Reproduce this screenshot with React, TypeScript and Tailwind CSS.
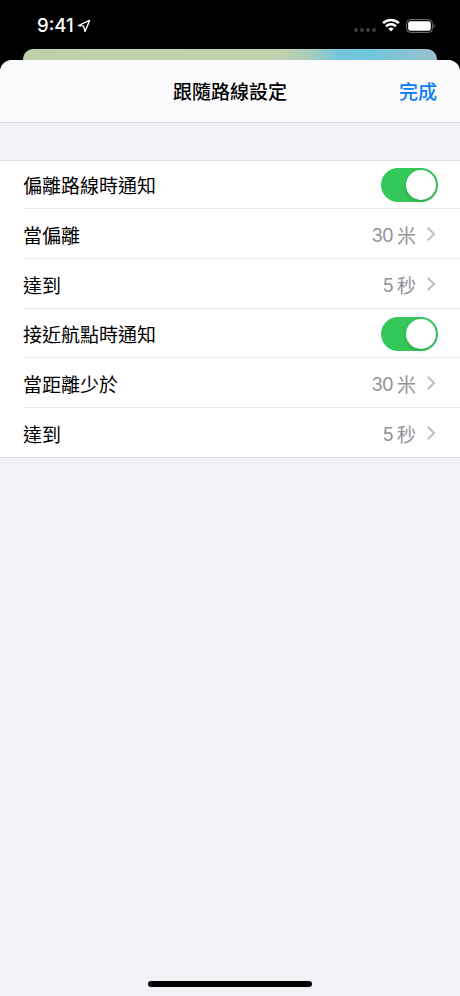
import React, { useState } from "react";

const StatusBar: React.FC = () => (
  <div className="flex h-[49px] items-start justify-between pl-[37px] pr-6 pt-[14px] text-white">
    <div className="flex h-6 items-center gap-[3px]">
      <span className="pb-[2px] text-[18.5px] font-medium leading-6">9:41</span>
      <svg width="14" height="14" viewBox="0 0 14 14" className="-mt-px" fill="none" stroke="currentColor" strokeWidth="1.4" strokeLinejoin="round">
        <path d="M12.6 1.4 1.4 6.6l5.2.5 1.4 5.3z" />
      </svg>
    </div>
    <div className="flex h-6 items-center">
      <div className="mr-[6px] mt-2 flex gap-[2px]">
        {[0, 1, 2, 3].map((i) => (
          <span key={i} className="h-1 w-1 rounded-full bg-[#3c3c3e]" />
        ))}
      </div>
      <svg width="18" height="14" viewBox="0 0 18 14" className="mr-[6px] -mt-[3px]" fill="none" stroke="currentColor" strokeWidth="2.5">
        <path d="M1.1 5.1a11.3 11.3 0 0 1 15.8 0" />
        <path d="M4 8.3a7.2 7.2 0 0 1 10 0" />
        <path d="M9 13.4 6.4 10.8a3.8 3.8 0 0 1 5.2 0z" fill="currentColor" stroke="none" />
      </svg>
      <svg width="30" height="14" viewBox="0 0 30 14" className="-mt-px">
        <rect x="0.6" y="0.6" width="25.8" height="12.8" rx="3.8" fill="none" stroke="#77777a" strokeWidth="1" />
        <rect x="2.2" y="2.2" width="22.6" height="9.6" rx="2.2" fill="#fff" />
        <path d="M27.6 4.8c1.5.7 1.5 3.7 0 4.4z" fill="#77777a" />
      </svg>
    </div>
  </div>
);

interface RowProps {
  label: string;
  height?: string;
  labelPadding?: string;
  last?: boolean;
  children: React.ReactNode;
}

const Row: React.FC<RowProps> = ({ label, height = "h-[50px]", labelPadding = "pt-[6px]", last, children }) => (
  <div className={`pl-[23px] ${height}`}>
    <div
      className={`flex h-full items-center justify-between pr-[22px] pt-px ${
        last ? "" : "border-b border-[#e9e9eb]"
      }`}
    >
      <span className={`text-[19px] leading-7 ${labelPadding}`}>{label}</span>
      {children}
    </div>
  </div>
);

const Toggle: React.FC<{ label: string }> = ({ label }) => {
  const [on, setOn] = useState(true);

  return (
    <button
      type="button"
      role="switch"
      aria-checked={on}
      aria-label={label}
      onClick={() => setOn(!on)}
      className={`flex h-[34px] w-[57px] items-center rounded-full p-[2px] ${
        on ? "justify-end bg-[#34c759]" : "justify-start bg-[#e9e9eb]"
      }`}
    >
      <span className="h-[30px] w-[30px] rounded-full bg-white shadow-[0_2px_4px_rgba(0,0,0,0.16)]" />
    </button>
  );
};

const Value: React.FC<{ amount: number; unit: string }> = ({ amount, unit }) => (
  <div className="flex items-center text-[#929295]">
    <span className="pt-px text-[18.5px] leading-7 tracking-[-0.8px]">{amount}</span>
    <span className="ml-[4px] pt-[6px] text-[19px] leading-7">{unit}</span>
    <svg width="10" height="16" viewBox="0 0 10 16" className="ml-[10px] mr-[2px]" fill="none" stroke="#c0c0c3" strokeWidth="2">
      <path d="m1.6 1.8 6.5 6.2-6.5 6.2" />
    </svg>
  </div>
);

const App: React.FC = () => {
  return (
    <div className="flex h-[996px] w-[460px] flex-col overflow-hidden bg-black font-['Inter','Noto_Sans_CJK_TC',sans-serif] text-black">
      <StatusBar />

      {/* Map screen peeking out behind the sheet */}
      <div className="mx-[23px] h-[11px] shrink-0 rounded-t-[10px] bg-[linear-gradient(90deg,#bfd0ab_0%,#c2d1ae_62%,#a9cdba_69%,#76c6da_76%,#70c7dc_84%,#9bbfcb_100%)]" />

      <div className="flex min-h-0 flex-1 flex-col rounded-t-[12px] bg-[#f1f1f6]">
        <header className="grid h-[63px] shrink-0 grid-cols-3 items-center rounded-t-[12px] border-b border-[#dadade] bg-[#fbfbfd] px-[23px] pt-[3px]">
          <h1 className="col-start-2 text-center text-[19px] font-medium leading-7">跟隨路線設定</h1>
          <button type="button" className="justify-self-end text-[19px] font-medium leading-7 text-[#0a7cf5]">
            完成
          </button>
        </header>

        <section className="mt-[37px] border-y border-[#dfdfe3] bg-white">
          <Row label="偏離路線時通知" height="h-[48px]" labelPadding="pt-[4px]">
            <Toggle label="偏離路線時通知" />
          </Row>
          <Row label="當偏離">
            <Value amount={30} unit="米" />
          </Row>
          <Row label="達到">
            <Value amount={5} unit="秒" />
          </Row>
          <Row label="接近航點時通知" height="h-[49px]" labelPadding="pt-[4px]">
            <Toggle label="接近航點時通知" />
          </Row>
          <Row label="當距離少於">
            <Value amount={30} unit="米" />
          </Row>
          <Row label="達到" height="h-[49px]" last>
            <Value amount={5} unit="秒" />
          </Row>
        </section>

        {/* Home indicator */}
        <div className="mx-auto mb-[9px] mt-auto h-[6px] w-[164px] rounded-full bg-black" />
      </div>
    </div>
  );
};

export default App;
